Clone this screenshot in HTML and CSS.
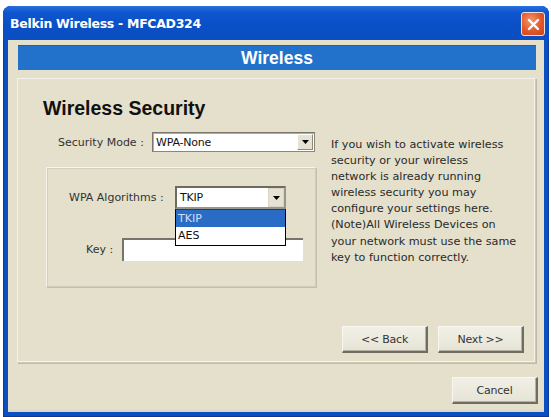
FILE: index.html
```html
<!DOCTYPE html>
<html>
<head>
<meta charset="utf-8">
<link rel="stylesheet" href="styles.css">
</head>
<body>
<div class="window">
  <div class="titlebar">
    <span class="title">Belkin Wireless - MFCAD324</span>
    <span class="close">
      <svg width="13" height="13" viewBox="0 0 13 13"><path d="M2 2 L11 11 M11 2 L2 11" stroke="#fff" stroke-width="2.4" stroke-linecap="round"/></svg>
    </span>
  </div>
  <div class="client">
    <div class="band">Wireless</div>
    <div class="panel">
      <div class="form-col">
        <h1 class="heading">Wireless Security</h1>
        <div class="row mode-row">
          <span class="label">Security Mode :</span>
          <div class="select mode-select">
            <span class="value">WPA-None</span>
            <span class="drop"><svg width="7" height="4" viewBox="0 0 7 4"><path d="M0 0 H7 L3.5 4 Z" fill="#000"/></svg></span>
          </div>
        </div>
        <div class="group">
          <div class="row algo-row">
            <span class="label">WPA Algorithms :</span>
            <div class="select algo-select">
              <span class="value">TKIP</span>
              <span class="drop"><svg width="7" height="4" viewBox="0 0 7 4"><path d="M0 0 H7 L3.5 4 Z" fill="#000"/></svg></span>
              <div class="list">
                <div class="opt sel">TKIP</div>
                <div class="opt">AES</div>
              </div>
            </div>
          </div>
          <div class="row key-row">
            <span class="label">Key :</span>
            <div class="input"></div>
          </div>
        </div>
      </div>
      <div class="side-col">
        <p class="help">If you wish to activate wireless<br>security or your wireless<br>network is already running<br>wireless security you may<br>configure your settings here.<br>(Note)All Wireless Devices on<br>your network must use the same<br>key to function correctly.</p>
        <div class="nav">
          <button class="btn">&lt;&lt; Back</button>
          <button class="btn">Next &gt;&gt;</button>
        </div>
      </div>
    </div>
    <div class="footer">
      <button class="btn">Cancel</button>
    </div>
  </div>
</div>
</body>
</html>
```

FILE: styles.css
```css
html, body {
  margin: 0;
  padding: 0;
  background: #ffffff;
}
body {
  padding: 6px 2px 0 3px;
  font-family: "DejaVu Sans", Verdana, sans-serif;
  font-size: 11px;
  color: #222;
}
.window {
  width: 546px;
  height: 411px;
  box-sizing: border-box;
  background: #0b4fc0;
  border-radius: 8px 8px 0 0;
  padding: 0 5px 5px 5px;
  display: flex;
  flex-direction: column;
  box-shadow: inset 0 0 0 1px #0a3a96;
}
.titlebar {
  height: 34px;
  display: flex;
  align-items: center;
  justify-content: space-between;
  background: linear-gradient(#2a6fdc 0%, #0d55cf 20%, #0a4fc6 60%, #0b4ec2 100%);
  margin: 0 -5px;
  padding-left: 7px;
  padding-right: 4px;
  border-radius: 8px 8px 0 0;
}
.title {
  color: #ffffff;
  font-family: "DejaVu Sans", sans-serif;
  font-weight: bold;
  font-size: 12.5px;
  letter-spacing: -0.3px;
  margin-top: 1px;
}
.close {
  width: 22px;
  height: 22px;
  border: 1px solid #f0e0dc;
  border-radius: 3px;
  background: radial-gradient(circle at 40% 35%, #f29a6e 0%, #e2572a 55%, #c8421c 100%);
  display: flex;
  align-items: center;
  justify-content: center;
  margin-top: 2px;
}
.client {
  flex: 1;
  background: #e4e0cc;
  display: flex;
  flex-direction: column;
  padding: 5px 8px 6px 9px;
  border-bottom: 2px solid #dcd8c8;
}
.band {
  height: 25px;
  margin-left: 1px;
  background: #2272cc;
  border-top: 1px solid #1b5fb8;
  color: #ffffff;
  font-family: "Liberation Sans", Arial, sans-serif;
  font-weight: bold;
  font-size: 17.5px;
  display: flex;
  align-items: center;
  justify-content: center;
  box-sizing: border-box;
}
.panel {
  margin-top: 8px;
  height: 285px;
  box-sizing: border-box;
  border: 1px solid #cdc9b8;
  border-top-color: #f4f2ea;
  border-left-color: #f4f2ea;
  box-shadow: inset -1px -1px 0 #f4f2ea, 1px 1px 0 #bebaa8;
  display: flex;
  padding: 0 11px 9px 27px;
}
.form-col {
  width: 271px;
  display: flex;
  flex-direction: column;
}
.heading {
  margin: 18px 0 0 -2px;
  font-family: "Liberation Sans", Arial, sans-serif;
  font-size: 19.5px;
  font-weight: bold;
  color: #111;
  line-height: 22px;
}
.row {
  display: flex;
  align-items: center;
}
.label {
  color: #333;
  font-size: 11px;
}
.mode-row {
  margin-top: 13px;
  margin-left: 13px;
}
.mode-row .label {
  width: 94px;
}
.select {
  position: relative;
  background: #ffffff;
  border: 1px solid #8a8778;
  border-top-color: #7a776a;
  border-left-color: #7a776a;
  box-shadow: inset 1px 1px 0 #b0ad9e;
  display: flex;
  align-items: center;
  box-sizing: border-box;
}
.select .value {
  flex: 1;
  padding-left: 3px;
  font-size: 11px;
  color: #111;
  letter-spacing: -0.2px;
}
.drop {
  width: 16px;
  align-self: stretch;
  margin: 1px;
  background: #e6e3d5;
  border: 1px solid #fff;
  border-right-color: #8d8a7c;
  border-bottom-color: #8d8a7c;
  box-sizing: border-box;
  display: flex;
  align-items: center;
  justify-content: center;
}
.mode-select {
  width: 163px;
  height: 20px;
}
.group {
  margin-top: 15px;
  margin-left: 1px;
  width: 270px;
  height: 120px;
  box-sizing: border-box;
  border: 1px solid #d0ccbb;
  border-top-color: #f6f4ec;
  border-left-color: #f6f4ec;
  box-shadow: 1px 1px 0 #c4c0ae, inset 1px 1px 0 #d3cfbe;
  display: flex;
  flex-direction: column;
}
.algo-row {
  margin-top: 18px;
  margin-left: 22px;
}
.algo-row .label {
  width: 106px;
}
.algo-select {
  width: 111px;
  height: 23px;
  border: 2px solid #6d6a5e;
  border-right-color: #9a978a;
  border-bottom-color: #9a978a;
  box-shadow: none;
}
.algo-select .drop {
  margin: 0;
  border: 1px solid #d8d5c6;
}
.list {
  position: absolute;
  left: -2px;
  top: 21px;
  width: 111px;
  box-sizing: border-box;
  border: 1px solid #000;
  border-top-color: #3a3a3a;
  background: #ffffff;
  z-index: 2;
  padding-bottom: 1px;
}
.opt {
  height: 17px;
  line-height: 17px;
  padding-left: 2px;
  font-size: 11px;
  color: #111;
}
.opt.sel {
  background: #2a6bc6;
  color: #cfe0f7;
}
.key-row {
  margin-top: 29px;
  margin-left: 39px;
}
.key-row .label {
  width: 36px;
}
.input {
  width: 181px;
  height: 23px;
  background: #ffffff;
  border-top: 2px solid #77746a;
  border-left: 2px solid #77746a;
  box-sizing: border-box;
}
.side-col {
  flex: 1;
  display: flex;
  flex-direction: column;
  padding-left: 15px;
}
.help {
  margin: 58px 0 0 0;
  font-size: 11.2px;
  line-height: 16.1px;
  color: #2a2a2a;
  white-space: nowrap;
  letter-spacing: 0;
}
.nav {
  margin-top: auto;
  display: flex;
  justify-content: flex-end;
  gap: 10px;
}
.btn {
  width: 86px;
  height: 27px;
  background: linear-gradient(#f2f0e6, #e6e3d6);
  border: 1px solid #f8f7f2;
  border-right: 2px solid #6f6c62;
  border-bottom: 2px solid #6f6c62;
  box-shadow: inset -1px -1px 0 #b5b2a4;
  font-family: "DejaVu Sans", Verdana, sans-serif;
  font-size: 11px;
  letter-spacing: -0.2px;
  color: #333;
  padding: 0;
}
.footer {
  margin-top: auto;
  display: flex;
  justify-content: flex-end;
  margin-right: -2px;
}
```
